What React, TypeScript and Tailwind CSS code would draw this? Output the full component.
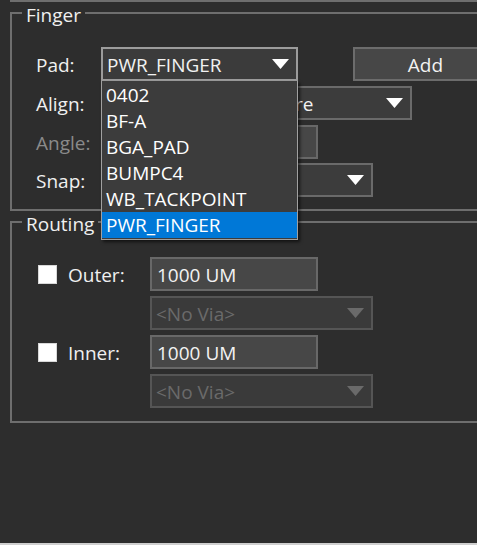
type ComboProps = {
  width: string;
  value: string;
  disabled?: boolean;
  open?: boolean;
  textClass?: string;
};

function Arrow({ disabled }: { disabled?: boolean }) {
  return (
    <svg width="17" height="10" viewBox="0 0 17 10" className="shrink-0">
      <polygon points="0,0 17,0 8.5,10" fill={disabled ? "#6a6a6a" : "#ffffff"} />
    </svg>
  );
}

function Combo({ width, value, disabled, open, textClass }: ComboProps) {
  return (
    <div
      className={`${width} h-[34px] flex items-center pl-[4px] pr-[7px] border-2 ${
        open
          ? "border-[#9c9c9c] bg-[#3b3b3b]"
          : disabled
          ? "border-[#555555] bg-[#3a3a3a]"
          : "border-[#6a6a6a] bg-[#3c3c3c]"
      }`}
    >
      <span
        className={`flex-1 overflow-hidden whitespace-nowrap pt-[2px] ${
          disabled ? "text-[#6a6a6a]" : "text-[#f2f2f2]"
        } ${textClass ?? ""}`}
      >
        {value}
      </span>
      <Arrow disabled={disabled} />
    </div>
  );
}

function TextBox({ width, value }: { width: string; value: string }) {
  return (
    <div
      className={`${width} h-[34px] flex items-center pl-[5px] pt-[2px] border-2 border-[#686868] bg-[#474747] text-[#f2f2f2] whitespace-nowrap`}
    >
      {value}
    </div>
  );
}

function Legend({ children }: { children: string }) {
  return (
    <legend className="ml-[10px] px-[4px] pt-[5px] leading-[17px] text-[#f0f0f0]">
      {children}
    </legend>
  );
}

const padItems = ["0402", "BF-A", "BGA_PAD", "BUMPC4", "WB_TACKPOINT", "PWR_FINGER"];

export default function App() {
  return (
    <div className="relative w-[477px] h-[545px] overflow-hidden bg-[#2d2d2d] font-['Open_Sans',sans-serif] text-[19px] text-[#f0f0f0] flex flex-col">
      <div className="ml-[10px] h-[2px] shrink-0 border-l-2 border-b-2 border-[#6e6e6e]" />

      {/* Finger */}
      <fieldset className="ml-[10px] w-[520px] shrink-0 border-2 border-[#6e6e6e] pt-[23px] pb-[12px]">
        <Legend>Finger</Legend>
        <div className="flex flex-col gap-[5px]">
          <div className="flex items-center pl-[24px]">
            <span className="w-[65px] pt-[3px]">Pad:</span>
            <Combo width="w-[197px]" value="PWR_FINGER" open />
            <button className="ml-[55px] w-[145px] h-[34px] border-2 border-[#6c6c6c] bg-[#474747] text-[#f2f2f2] pt-[2px]">
              Add
            </button>
          </div>
          <div className="flex items-center pl-[24px]">
            <span className="w-[65px] pt-[3px]">Align:</span>
            <Combo width="w-[311px]" value="Centre" textClass="pl-[147px]" />
          </div>
          <div className="flex items-center pl-[24px]">
            <span className="w-[65px] pt-[3px] text-[#8a8a8a]">Angle:</span>
            <TextBox width="w-[217px]" value="" />
          </div>
          <div className="flex items-center pl-[24px] mt-[-1px]">
            <span className="w-[65px] pt-[3px]">Snap:</span>
            <Combo width="w-[272px]" value="" />
          </div>
        </div>
      </fieldset>

      {/* Routing */}
      <fieldset className="ml-[10px] w-[520px] shrink-0 border-2 border-[#6e6e6e] pt-[24px] pb-[13px]">
        <Legend>Routing</Legend>
        <div className="flex flex-col gap-[5px]">
          <div className="flex items-center pl-[26px]">
            <span className="w-[19px] h-[19px] bg-white border border-[#d8d8d8]" />
            <span className="ml-[11px] w-[82px] pt-[2px]">Outer:</span>
            <TextBox width="w-[168px]" value="1000 UM" />
          </div>
          <div className="flex pl-[138px]">
            <Combo width="w-[223px]" value="<No Via>" disabled />
          </div>
          <div className="flex items-center pl-[26px]">
            <span className="w-[19px] h-[19px] bg-white border border-[#d8d8d8]" />
            <span className="ml-[11px] w-[82px] pt-[2px]">Inner:</span>
            <TextBox width="w-[168px]" value="1000 UM" />
          </div>
          <div className="flex pl-[138px]">
            <Combo width="w-[223px]" value="<No Via>" disabled />
          </div>
        </div>
      </fieldset>

      <div className="mt-auto h-[2px] shrink-0 bg-[#cfcfcf]" />

      {/* open Pad list */}
      <ul className="absolute left-[101px] top-[81px] w-[197px] border border-t-0 border-[#a0a0a0] bg-[#3c3c3c] pt-[1px] pb-[1px] shadow-[2px_2px_3px_rgba(0,0,0,0.6)]">
        {padItems.map((item, i) => (
          <li
            key={item}
            className={`h-[26px] flex items-center pl-[4px] pt-[1px] text-white whitespace-nowrap ${
              i === padItems.length - 1 ? "bg-[#0078d7]" : ""
            }`}
          >
            {item}
          </li>
        ))}
      </ul>
    </div>
  );
}
